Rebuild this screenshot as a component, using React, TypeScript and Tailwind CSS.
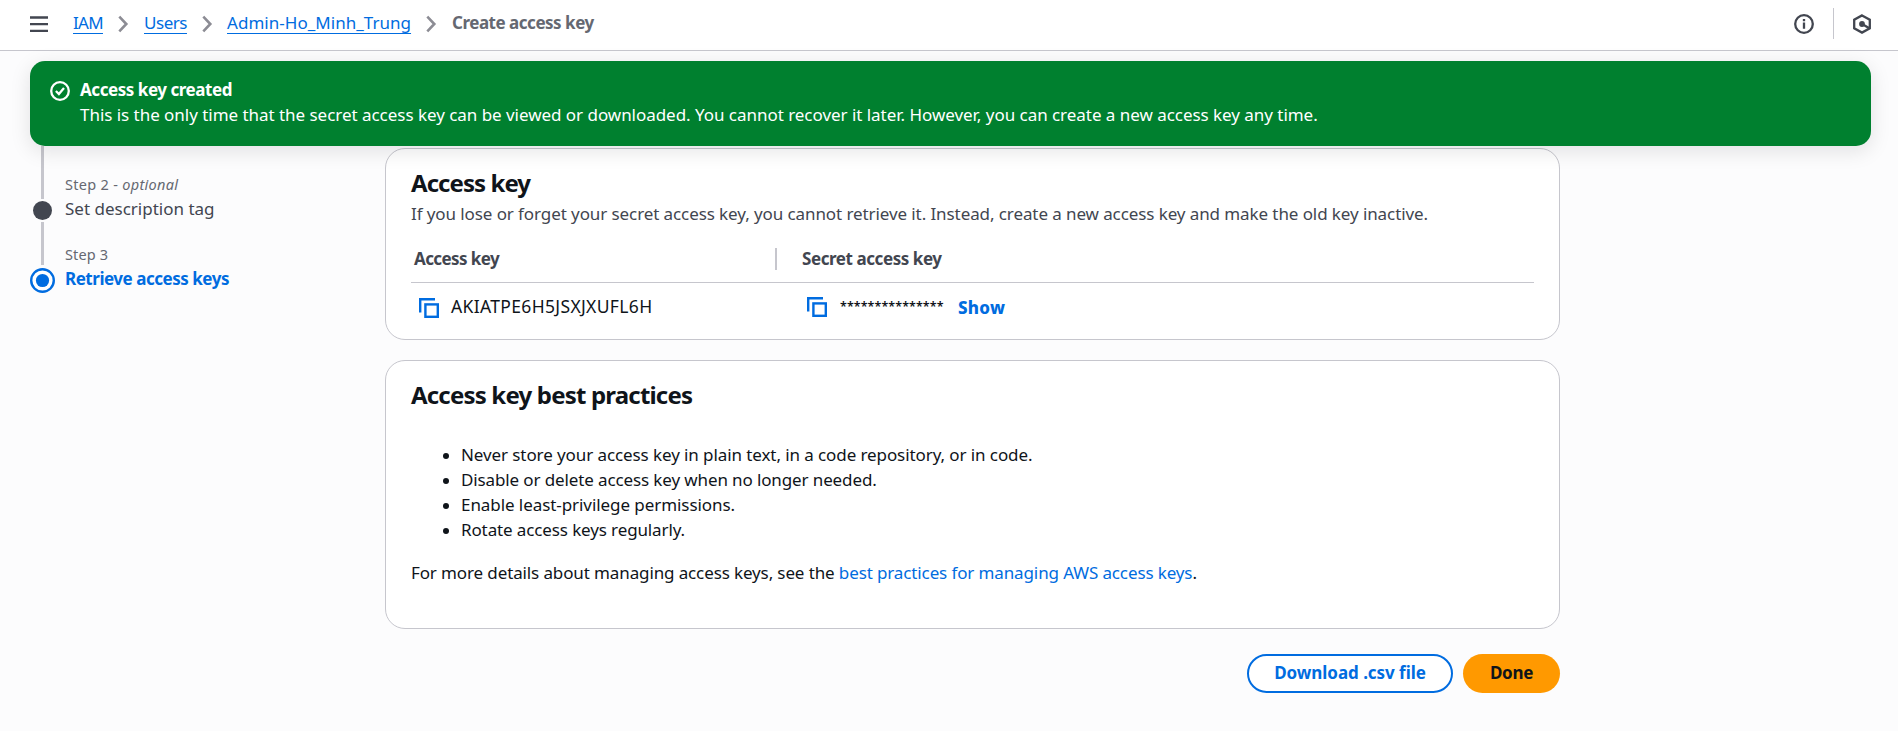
import React from "react";

function Chevron() {
  return (
    <svg className="h-5 w-5 shrink-0" viewBox="0 0 20 20" fill="none" stroke="#8c8c94" strokeWidth="2.6">
      <path d="M6.3 2.6 13.3 10l-7 7.4" />
    </svg>
  );
}

function CopyIcon() {
  return (
    <svg className="h-5 w-5 shrink-0" viewBox="0 0 20 20" fill="none" stroke="#006ce0" strokeWidth="2.4">
      <path d="M1.2 14.6V1.2H16" />
      <rect x="6.4" y="6.4" width="12.4" height="12.4" />
    </svg>
  );
}

function Header() {
  const link =
    "text-[#006ce0] underline decoration-1 underline-offset-4 [text-decoration-skip-ink:none]";
  return (
    <header className="flex h-[51px] justify-between border-b border-[#c6c6cd] bg-white pr-[27px] pl-[30px]">
      <div className="flex items-start">
        <svg className="mt-[14px] h-5 w-[18px]" viewBox="0 0 18 20" stroke="#424650" strokeWidth="2.3">
          <path d="M0 3.5h18M0 10.2h18M0 16.9h18" />
        </svg>
        <nav className="mt-[10px] ml-[25px] flex h-[25px] text-[17px] leading-[25px]">
          <a className={`${link} w-[30px] tracking-[-0.69px] whitespace-nowrap`}>IAM</a>
          <span className="mt-1 mr-[11px] ml-[10px]"><Chevron /></span>
          <a className={`${link} w-[43px] tracking-[-0.47px] whitespace-nowrap`}>Users</a>
          <span className="mt-1 mr-[10px] ml-[10px]"><Chevron /></span>
          <a className={`${link} w-[184px] tracking-[0.03px] whitespace-nowrap`}>Admin-Ho_Minh_Trung</a>
          <span className="mt-1 mr-[11px] ml-[10px]"><Chevron /></span>
          <span className="font-bold tracking-[-0.48px] whitespace-nowrap text-[#656871]">
            Create access key
          </span>
        </nav>
      </div>
      <div className="flex items-start">
        <svg className="mt-[14px] h-5 w-5" viewBox="0 0 20 20" fill="none" stroke="#424650" strokeWidth="2.3">
          <circle cx="10" cy="10" r="8.8" />
          <path d="M10 8.6v6.2M10 5v2.3" />
        </svg>
        <div className="mt-2 ml-[19px] h-[31px] w-px bg-[#c6c6cd]" />
        <svg className="mt-[14px] ml-[19px] h-5 w-[18px]" viewBox="0 0 18 20" fill="none" stroke="#424650" strokeWidth="2.3">
          <path d="M9 1.4 16.8 5.7v8.6L9 18.6 1.2 14.3V5.7z" />
          <circle cx="9" cy="10" r="2.9" fill="#424650" stroke="none" />
          <path d="m9 10 7.4 4.2" />
        </svg>
      </div>
    </header>
  );
}

function Banner() {
  return (
    <div className="relative z-10 mr-[27px] ml-[30px] flex h-[85px] rounded-[15px] bg-[#00802f] pt-4 pl-5 text-[17px] leading-[25px] text-white shadow-[0_5px_20px_1px_rgba(0,7,22,0.1)]">
      <svg className="mt-[4px] mr-[10px] h-5 w-5 shrink-0" viewBox="0 0 20 20" fill="none" stroke="white" strokeWidth="2.3">
        <circle cx="10" cy="10" r="8.8" />
        <path d="m5.9 10 3 3 5.1-5.9" />
      </svg>
      <div className="whitespace-nowrap">
        <p className="font-bold tracking-[-0.45px]">Access key created</p>
        <p className="tracking-[-0.035px]">
          This is the only time that the secret access key can be viewed or downloaded. You cannot
          recover it later. However, you can create a new access key any time.
        </p>
      </div>
    </div>
  );
}

function Steps() {
  return (
    <aside className="flex w-[355px] shrink-0 gap-[10px]">
      <div className="flex w-[25px] flex-col items-center">
        <div className="h-[53px] w-[3px] bg-[#c6c6cd]" />
        <div className="my-[2px] h-[19px] w-[19px] rounded-full bg-[#424650]" />
        <div className="mb-[3px] h-[43px] w-[3px] bg-[#c6c6cd]" />
        <svg className="h-[25px] w-[25px]" viewBox="0 0 25 25">
          <circle cx="12.5" cy="12.5" r="11.3" fill="white" stroke="#006ce0" strokeWidth="2.4" />
          <circle cx="12.5" cy="12.5" r="6.6" fill="#006ce0" />
        </svg>
      </div>
      <div className="pt-7 whitespace-nowrap">
        <p className="text-[14.5px] leading-5 tracking-[0.3px] text-[#656871]">
          Step 2 - <em>optional</em>
        </p>
        <p className="mt-[2px] text-[17px] leading-[25px] text-[#424650]">Set description tag</p>
        <p className="mt-[23px] text-[14.5px] leading-5 tracking-[0.15px] text-[#656871]">Step 3</p>
        <p className="mt-[2px] text-[17px] leading-[25px] font-bold tracking-[-0.47px] text-[#006ce0]">
          Retrieve access keys
        </p>
      </div>
    </aside>
  );
}

function KeyCard() {
  return (
    <section className="h-[192px] rounded-[20px] border border-[#c6c6cd] bg-white px-[25px] pt-[19px] whitespace-nowrap">
      <h2 className="text-[24px] leading-[30px] font-bold tracking-[-0.94px]">Access key</h2>
      <p className="mt-[3px] text-[17px] leading-[25px] tracking-[-0.09px] text-[#424650]">
        If you lose or forget your secret access key, you cannot retrieve it. Instead, create a new
        access key and make the old key inactive.
      </p>
      <div className="mt-5 flex h-[37px] border-b border-[#c6c6cd] pl-[3px] text-[17px] leading-[25px] font-bold text-[#424650]">
        <div className="w-[361px] tracking-[-0.6px]">Access key</div>
        <div className="mt-[2px] mr-[25px] h-[22px] w-[2px] bg-[#c6c6cd]" />
        <div className="tracking-[-0.43px]">Secret access key</div>
      </div>
      <div className="mt-[11px] flex pl-2 leading-[25px]">
        <div className="flex w-[388px]">
          <span className="mt-1 mr-3"><CopyIcon /></span>
          <span className="text-[17.5px] tracking-[0.34px]">AKIATPE6H5JSXJXUFL6H</span>
        </div>
        <span className="mt-[3px] mr-[13px]"><CopyIcon /></span>
        <span className="w-[118px] text-[12.5px] font-semibold tracking-[0.08px]">***************</span>
        <span className="mt-px text-[17px] font-extrabold tracking-[0.3px] text-[#006ce0]">Show</span>
      </div>
    </section>
  );
}

const practices = [
  { text: "Never store your access key in plain text, in a code repository, or in code.", track: "tracking-[-0.09px]" },
  { text: "Disable or delete access key when no longer needed.", track: "tracking-[-0.12px]" },
  { text: "Enable least-privilege permissions.", track: "tracking-[-0.07px]" },
  { text: "Rotate access keys regularly.", track: "tracking-[-0.12px]" },
];

function PracticesCard() {
  return (
    <section className="mt-5 h-[269px] rounded-[20px] border border-[#c6c6cd] bg-white px-[25px] pt-[19px] text-[17px] leading-[25px] whitespace-nowrap">
      <h2 className="text-[24px] leading-[30px] font-bold tracking-[-0.81px]">
        Access key best practices
      </h2>
      <ul className="mt-8 pl-8">
        {practices.map((p) => (
          <li key={p.text} className={`flex items-start ${p.track}`}>
            <span className="mt-[11px] mr-3 h-[6px] w-[6px] rounded-full bg-[#0f141a]" />
            {p.text}
          </li>
        ))}
      </ul>
      <p className="mt-[18px] tracking-[-0.12px]">
        For more details about managing access keys, see the{" "}
        <a className="text-[#006ce0]">best practices for managing AWS access keys</a>.
      </p>
    </section>
  );
}

export default function App() {
  return (
    <div className="h-[731px] overflow-hidden bg-[#fcfcfd] font-['Noto_Sans','Open_Sans',sans-serif] text-[#0f141a]">
      <Header />
      <div className="pt-[10px]">
        <Banner />
      </div>
      <div className="flex pl-[30px]">
        <Steps />
        <main className="w-[1175px] pt-[2px]">
          <KeyCard />
          <PracticesCard />
          <div className="mt-[25px] flex justify-end gap-[10px] text-[17px] font-bold">
            <button className="h-[39px] w-[206px] rounded-full border-[2px] border-[#006ce0] bg-white pb-[2px] leading-[25px] tracking-[-0.05px] text-[#006ce0]">
              Download .csv file
            </button>
            <button className="h-[39px] w-[97px] rounded-full bg-[#ff9900] pb-[2px] leading-[25px] tracking-[-0.3px]">
              Done
            </button>
          </div>
        </main>
      </div>
    </div>
  );
}
